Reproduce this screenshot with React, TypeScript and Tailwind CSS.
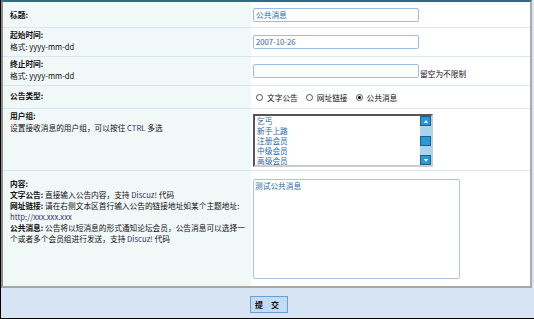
import React from 'react';

const labelCell = 'bg-[#f1f8f8] pl-[7px] border-b border-[#d9e7f3] whitespace-nowrap';
const fieldCell = 'bg-white pl-[2px] border-b border-[#d9e7f3]';

const Radio = ({ checked, label }: { checked?: boolean; label: string }) => (
    <span className="flex items-center gap-[4px] mr-[8px]">
        <span className="w-[7px] h-[7px] rounded-full border border-[#555] bg-white flex items-center justify-center">
            {checked && <span className="w-[3px] h-[3px] rounded-full bg-black"></span>}
        </span>
        <span>{label}</span>
    </span>
);

const groups = ['乞丐', '新手上路', '注册会员', '中级会员', '高级会员'];

export default function App() {
    return (
        <div
            className="w-[534px] h-[319px] bg-[#d7e4f4] border-l border-b border-black text-[7.7px] leading-[11px] text-[#111] flex flex-col"
            style={{ fontFamily: '"Noto Sans CJK SC", "Liberation Sans", sans-serif' }}
        >
            {/* form table */}
            <div className="w-[531px] border-t-2 border-t-[#2e6e7c] border-l-2 border-l-[#8c9089] border-r-2 border-r-[#a9ada5] border-b-2 border-b-[#a5a99f] grid grid-cols-[248px_1fr]">
                {/* 标题 */}
                <div className={`${labelCell} h-[26px] flex items-center font-bold`}>标题:</div>
                <div className={`${fieldCell} h-[26px] flex items-center`}>
                    <div className="w-[166px] h-[14px] border border-[#9dbde0] rounded-[2px] px-[2px] text-[#2a67a8] leading-[12px]">公共消息</div>
                </div>

                {/* 起始时间 */}
                <div className={`${labelCell} h-[29px] pt-[1px]`}>
                    <div className="font-bold">起始时间:</div>
                    <div className="mt-[1px]">格式: yyyy-mm-dd</div>
                </div>
                <div className={`${fieldCell} h-[29px] flex items-center`}>
                    <div className="w-[166px] h-[14px] border border-[#9dbde0] rounded-[2px] px-[2px] text-[#2a67a8] leading-[12px]">2007-10-26</div>
                </div>

                {/* 终止时间 */}
                <div className={`${labelCell} h-[29px] pt-[1px]`}>
                    <div className="font-bold">终止时间:</div>
                    <div className="mt-[1px]">格式: yyyy-mm-dd</div>
                </div>
                <div className={`${fieldCell} h-[29px] flex items-center`}>
                    <div className="w-[166px] h-[14px] border border-[#9dbde0] rounded-[2px]"></div>
                    <span className="ml-[1px] mt-[5px]">留空为不限制</span>
                </div>

                {/* 公告类型 */}
                <div className={`${labelCell} h-[23px] pt-[4px] font-bold`}>公告类型:</div>
                <div className={`${fieldCell} h-[23px] flex items-center pl-[5px]`}>
                    <Radio label="文字公告" />
                    <Radio label="网址链接" />
                    <Radio checked label="公共消息" />
                </div>

                {/* 用户组 */}
                <div className={`${labelCell} h-[62px] pt-[1px]`}>
                    <div className="font-bold">用户组:</div>
                    <div className="mt-[1px]">设置接收消息的用户组，可以按住 <span className="text-[#333366]">CTRL</span> 多选</div>
                </div>
                <div className={`${fieldCell} h-[62px] pt-[5px]`}>
                    <div className="w-[180px] h-[53px] border-2 border-t-[#555] border-l-[#555] border-r-[#ccc] border-b-[#ccc] flex bg-white">
                        <div className="flex-1 pl-[2px] text-[#2a67a8] leading-[10px] overflow-hidden">
                            {groups.map(g => <div key={g}>{g}</div>)}
                        </div>
                        <div className="w-[11px] flex flex-col bg-[#a9d4ee]">
                            <div className="h-[10px] bg-[#2a98d6] border border-[#1b5f8a] flex items-center justify-center">
                                <span className="w-0 h-0 border-l-[2px] border-r-[2px] border-b-[3px] border-l-transparent border-r-transparent border-b-white"></span>
                            </div>
                            <div className="flex-1 flex flex-col justify-center">
                                <div className="h-[10px] bg-[#2a98d6] border border-[#1b5f8a]"></div>
                            </div>
                            <div className="h-[10px] bg-[#2a98d6] border border-[#1b5f8a] flex items-center justify-center">
                                <span className="w-0 h-0 border-l-[2px] border-r-[2px] border-t-[3px] border-l-transparent border-r-transparent border-t-white"></span>
                            </div>
                        </div>
                    </div>
                </div>

                {/* 内容 */}
                <div className={`${labelCell} h-[115px] pt-[7px] border-b-0`}>
                    <div className="font-bold">内容:</div>
                    <div><span className="font-bold">文字公告:</span> 直接输入公告内容，支持 <span className="text-[#333366]">Discuz!</span> 代码</div>
                    <div><span className="font-bold">网址链接:</span> 请在右侧文本区首行输入公告的链接地址如某个主题地址:</div>
                    <div className="text-[#333366]">http://xxx.xxx.xxx</div>
                    <div><span className="font-bold">公共消息:</span> 公告将以短消息的形式通知论坛会员，公告消息可以选择一</div>
                    <div>个或者多个会员组进行发送，支持 <span className="text-[#333366]">Discuz!</span> 代码</div>
                </div>
                <div className={`${fieldCell} h-[115px] pt-[8px] border-b-0`}>
                    <div className="w-[207px] h-[100px] border border-[#a8c6e4] rounded-[2px] px-[1px] text-[#2a67a8]">测试公共消息</div>
                </div>
            </div>

            {/* submit */}
            <div className="flex-1 flex items-center justify-center pl-[2px] pt-[2px]">
                <button className="w-[38px] h-[17px] bg-[#c3dcf5] border border-[#6c9fce] font-bold text-[8px] leading-[15px] text-[#111] tracking-[3px]">提 交</button>
            </div>
        </div>
    );
}
